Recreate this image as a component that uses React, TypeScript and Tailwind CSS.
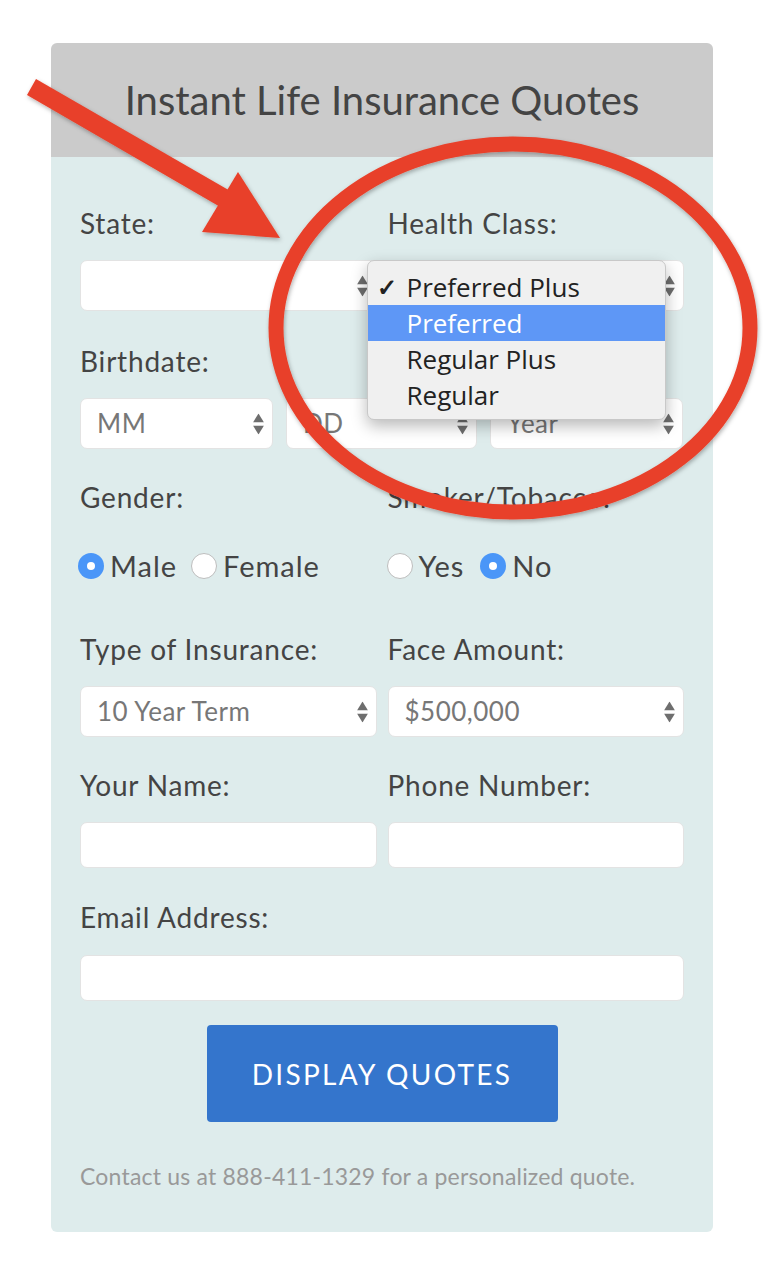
import React from 'react';

const font = { fontFamily: 'Lato, "Open Sans", sans-serif' };

function Arrows() {
  return (
    <span className="absolute right-[8px] top-1/2 -translate-y-1/2 flex flex-col gap-[3px]">
      <svg width="11" height="9" viewBox="0 0 11 9">
        <path d="M5.5 0 L11 9 L0 9 Z" fill="#6e6e6e" />
      </svg>
      <svg width="11" height="9" viewBox="0 0 11 9">
        <path d="M0 0 L11 0 L5.5 9 Z" fill="#6e6e6e" />
      </svg>
    </span>
  );
}

function Select({ value, className = '' }: { value?: string; className?: string }) {
  return (
    <div
      className={`relative h-[51px] bg-white rounded-[7px] border border-[#e3e3e3] flex items-center pl-[16px] text-[26px] tracking-[0.5px] text-[#777] ${className}`}
    >
      {value}
      <Arrows />
    </div>
  );
}

function Input({ className = '' }: { className?: string }) {
  return <div className={`h-[46px] bg-white rounded-[7px] border border-[#e3e3e3] ${className}`} />;
}

function Label({ children, className = '' }: { children: React.ReactNode; className?: string }) {
  return <div className={`text-[28px] leading-[34px] tracking-[0.8px] text-[#444] ${className}`}>{children}</div>;
}

function Radio({ checked, label }: { checked?: boolean; label: string }) {
  return (
    <div className="flex items-center gap-[6px]">
      {checked ? (
        <span className="w-[26px] h-[26px] rounded-full bg-[#4a96f8] flex items-center justify-center">
          <span className="w-[8px] h-[8px] rounded-full bg-white" />
        </span>
      ) : (
        <span className="w-[26px] h-[26px] rounded-full bg-white border border-[#bdbdbd]" />
      )}
      <span className="text-[29px] tracking-[1px] text-[#444]">{label}</span>
    </div>
  );
}

export default function App() {
  const options = ['Preferred Plus', 'Preferred', 'Regular Plus', 'Regular'];

  return (
    <div className="relative w-[768px] min-h-[1283px] bg-white" style={font}>
      <div className="pt-[43px] pl-[51px]">
        <div className="w-[662px] rounded-[6px] overflow-hidden">
          {/* Header */}
          <div className="h-[114px] bg-[#cbcbcb] flex items-center justify-center text-[40px] text-[#444]">
            Instant Life Insurance Quotes
          </div>

          {/* Form */}
          <div className="bg-[#deecec] px-[29px] pt-[49px] pb-[42px]">
            <div className="grid grid-cols-2 gap-x-[11px]">
              <Label>State:</Label>
              <Label>Health Class:</Label>
            </div>
            <div className="grid grid-cols-2 gap-x-[11px] mt-[20px]">
              <Select />
              <div className="relative">
                <Select />
                <div
                  className="absolute left-[-21px] top-0 w-[299px] h-[160px] bg-[#f0f0f0] rounded-[7px] border border-[#c8c8c8] shadow-[0_6px_16px_rgba(0,0,0,0.28)] py-[8px] z-10"
                  style={{ fontFamily: '"Open Sans", "Liberation Sans", sans-serif' }}
                >
                  {options.map((o, i) => (
                    <div
                      key={o}
                      className={`h-[36px] flex items-center text-[26px] ${i === 1 ? 'bg-[#5e97f6] text-white' : 'text-[#222]'}`}
                    >
                      <span className="w-[39px] flex justify-center text-[24px] font-bold">{i === 0 ? '✓' : ''}</span>
                      {o}
                    </div>
                  ))}
                </div>
              </div>
            </div>

            <Label className="mt-[33px]">Birthdate:</Label>
            <div className="flex gap-[13px] mt-[20px]">
              <Select value="MM" className="w-[193px]" />
              <Select value="DD" className="w-[191px]" />
              <Select value="Year" className="w-[193px]" />
            </div>

            <div className="grid grid-cols-2 gap-x-[11px] mt-[31px]">
              <Label>Gender:</Label>
              <Label>Smoker/Tobacco:</Label>
            </div>
            <div className="grid grid-cols-2 gap-x-[11px] mt-[30px] h-[34px] -ml-[2px]">
              <div className="flex items-center gap-[14px]">
                <Radio checked label="Male" />
                <Radio label="Female" />
              </div>
              <div className="flex items-center gap-[16px]">
                <Radio label="Yes" />
                <Radio checked label="No" />
              </div>
            </div>

            <div className="grid grid-cols-2 gap-x-[11px] mt-[54px]">
              <Label>Type of Insurance:</Label>
              <Label>Face Amount:</Label>
            </div>
            <div className="grid grid-cols-2 gap-x-[11px] mt-[20px]">
              <Select value="10 Year Term" />
              <Select value="$500,000" />
            </div>

            <div className="grid grid-cols-2 gap-x-[11px] mt-[31px]">
              <Label>Your Name:</Label>
              <Label>Phone Number:</Label>
            </div>
            <div className="grid grid-cols-2 gap-x-[11px] mt-[20px]">
              <Input />
              <Input />
            </div>

            <Label className="mt-[32px]">Email Address:</Label>
            <Input className="mt-[21px]" />

            <div className="flex justify-center mt-[24px]">
              <button className="w-[351px] h-[97px] bg-[#3475cc] rounded-[4px] text-white text-[28px] tracking-[2.3px]">
                DISPLAY QUOTES
              </button>
            </div>

            <div className="mt-[40px] text-[23px] leading-[28px] tracking-[0.2px] text-[#999]">
              Contact us at 888-411-1329 for a personalized quote.
            </div>
          </div>
        </div>
      </div>

      {/* Annotation overlay: arrow and circle */}
      <svg
        className="absolute inset-0 pointer-events-none z-20"
        width="768"
        height="1283"
        viewBox="0 0 768 1283"
      >
        <defs>
          <filter id="sh" x="-10%" y="-10%" width="120%" height="120%">
            <feDropShadow dx="1" dy="2" stdDeviation="2" floodColor="#000" floodOpacity="0.3" />
          </filter>
        </defs>
        <g filter="url(#sh)" fill="#e8402a" stroke="none">
          <path d="M27 95 L36 79 L232 192 L222 208 Z" />
          <path d="M238 172 L280 238 L202 232 Z" />
          <ellipse cx="513" cy="328" rx="237" ry="184" fill="none" stroke="#e8402a" strokeWidth="15" />
        </g>
      </svg>
    </div>
  );
}
